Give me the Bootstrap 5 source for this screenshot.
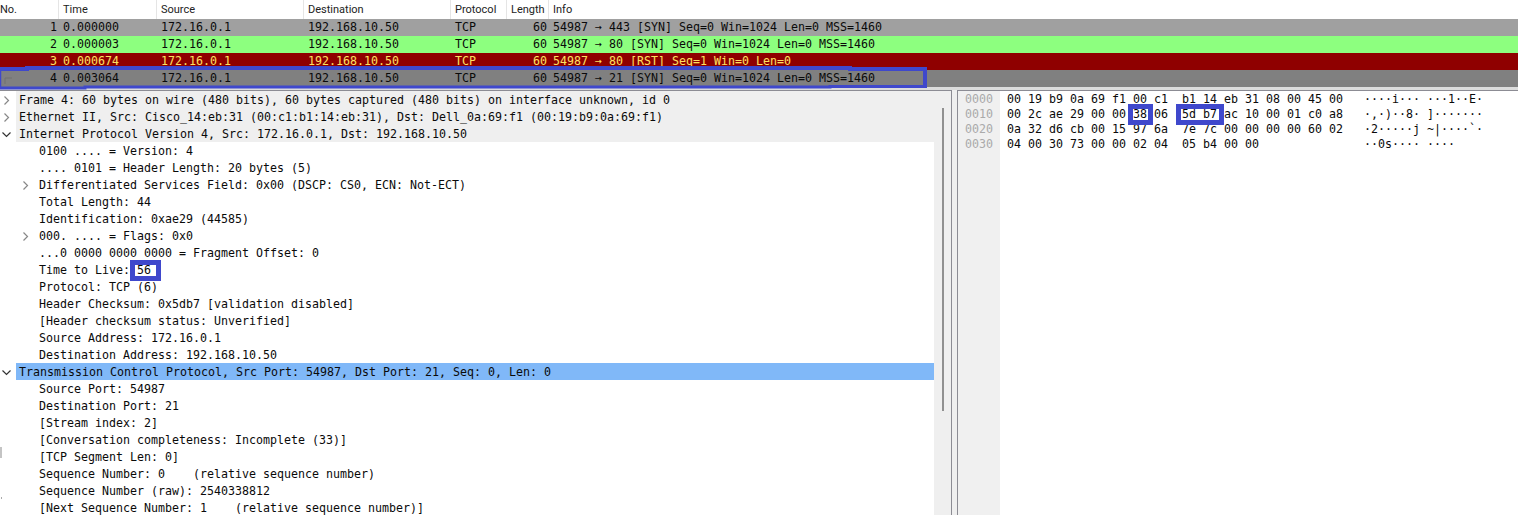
<!DOCTYPE html>
<html lang="en">
<head>
<meta charset="utf-8">
<title>Packet capture</title>
<link href="https://cdn.jsdelivr.net/npm/bootstrap@5.3.0/dist/css/bootstrap.min.css" rel="stylesheet">
<style>
html,body{height:518px;overflow:hidden;background:#fff;}
body{font-family:"DejaVu Sans Mono","Liberation Mono",monospace;font-size:11.63px;color:#0a0a0a;position:relative;}
.pk-head{height:19px;font-family:Roboto,"Liberation Sans",sans-serif;font-size:11px;line-height:19px;color:#222;}
.pk-head>div{padding-left:4px;border-right:1px solid #e5e5e5;height:19px;white-space:nowrap;}
.c-no{width:59px;flex:none;}
.pk-head .c-no{padding-left:0;}
.c-time{width:98px;flex:none;}
.c-src,.c-dst{width:147px;flex:none;}
.c-pro{width:56px;flex:none;}
.c-len{width:42px;flex:none;}
.c-info{flex:1 1 0;}
.pk-row{height:17px;line-height:17px;white-space:pre;overflow:hidden;}
.pk-row>.c-no{text-align:right;padding-right:2px;}
.pk-row>.c-time{padding-left:4px;}
.pk-row>.c-src,.pk-row>.c-dst,.pk-row>.c-pro{padding-left:4px;}
.pk-row>.c-len{text-align:right;padding-right:2px;}
.pk-row>.c-info{padding-left:4px;}
.r-gray{background:#a0a0a0;}
.r-green{background:#8dff7f;}
.r-red{background:#8f0000;color:#ffe060;}
.r-dark{background:#808080;}
.r-rest{height:3px;background:#dcdcdc;}
.panes{height:425px;}
.tree-pane,.scroll-pane,.off-col,.hex-col{border-top:1px solid #8c8c94;}
.tree-pane{width:934px;flex:none;overflow:hidden;}
.tr-row{height:17px;line-height:19px;white-space:pre;position:relative;padding-left:19px;}
.tr-row.sub{padding-left:39px;}
.tr-row.open{background:#efefef;margin-left:16px;padding-left:3px;}
.tr-row.sel{background:#80b8f8;margin-left:16px;padding-left:3px;}
.tw{position:absolute;top:5px;width:9px;height:9px;}
.open .tw,.sel .tw{left:-14px;}
.sub .tw{left:21px;}
.scroll-pane{width:18px;flex:none;background:#efefef;border-right:1px solid #8c8c94;}
.thumb{width:2px;margin-left:8px;height:303px;margin-top:17px;background:#909090;}
.sash{width:5px;flex:none;background:#efefef;}
.off-col{width:43px;flex:none;background:#f0f0f0;color:#aaa;padding-left:7px;padding-top:1px;line-height:15px;white-space:pre;border-left:1px solid #8c8c94;}
.hex-col{flex:1 1 0;padding-left:7px;padding-top:1px;line-height:15px;white-space:pre;overflow:hidden;}
.mark-box{position:absolute;border:5px solid #3f48cc;pointer-events:none;}
.overlay{position:absolute;left:0;top:0;pointer-events:none;}
</style>
</head>
<body>
<div class="d-flex pk-head">
<div class="c-no">No.</div><div class="c-time">Time</div><div class="c-src">Source</div><div class="c-dst">Destination</div><div class="c-pro">Protocol</div><div class="c-len">Length</div><div class="c-info border-0">Info</div>
</div>
<div class="d-flex pk-row r-gray"><div class="c-no">1</div><div class="c-time">0.000000</div><div class="c-src">172.16.0.1</div><div class="c-dst">192.168.10.50</div><div class="c-pro">TCP</div><div class="c-len">60</div><div class="c-info">54987 → 443 [SYN] Seq=0 Win=1024 Len=0 MSS=1460</div></div>
<div class="d-flex pk-row r-green"><div class="c-no">2</div><div class="c-time">0.000003</div><div class="c-src">172.16.0.1</div><div class="c-dst">192.168.10.50</div><div class="c-pro">TCP</div><div class="c-len">60</div><div class="c-info">54987 → 80 [SYN] Seq=0 Win=1024 Len=0 MSS=1460</div></div>
<div class="d-flex pk-row r-red"><div class="c-no">3</div><div class="c-time">0.000674</div><div class="c-src">172.16.0.1</div><div class="c-dst">192.168.10.50</div><div class="c-pro">TCP</div><div class="c-len">60</div><div class="c-info">54987 → 80 [RST] Seq=1 Win=0 Len=0</div></div>
<div class="d-flex pk-row r-dark"><div class="c-no">4</div><div class="c-time">0.003064</div><div class="c-src">172.16.0.1</div><div class="c-dst">192.168.10.50</div><div class="c-pro">TCP</div><div class="c-len">60</div><div class="c-info">54987 → 21 [SYN] Seq=0 Win=1024 Len=0 MSS=1460</div></div>
<div class="r-rest"></div>
<div class="d-flex panes">
<div class="tree-pane">
<div class="tr-row open"><svg class="tw" viewBox="0 0 9 9"><path d="M2.5 .5 6.5 4.5 2.5 8.5" fill="none" stroke="#888" stroke-width="1.2"/></svg>Frame 4: 60 bytes on wire (480 bits), 60 bytes captured (480 bits) on interface unknown, id 0</div>
<div class="tr-row open"><svg class="tw" viewBox="0 0 9 9"><path d="M2.5 .5 6.5 4.5 2.5 8.5" fill="none" stroke="#888" stroke-width="1.2"/></svg>Ethernet II, Src: Cisco_14:eb:31 (00:c1:b1:14:eb:31), Dst: Dell_0a:69:f1 (00:19:b9:0a:69:f1)</div>
<div class="tr-row open"><svg class="tw" viewBox="0 0 9 9"><path d="M.5 2.5 4.5 6.5 8.5 2.5" fill="none" stroke="#333" stroke-width="1.2"/></svg>Internet Protocol Version 4, Src: 172.16.0.1, Dst: 192.168.10.50</div>
<div class="tr-row sub">0100 .... = Version: 4</div>
<div class="tr-row sub">.... 0101 = Header Length: 20 bytes (5)</div>
<div class="tr-row sub"><svg class="tw" viewBox="0 0 9 9"><path d="M2.5 .5 6.5 4.5 2.5 8.5" fill="none" stroke="#888" stroke-width="1.2"/></svg>Differentiated Services Field: 0x00 (DSCP: CS0, ECN: Not-ECT)</div>
<div class="tr-row sub">Total Length: 44</div>
<div class="tr-row sub">Identification: 0xae29 (44585)</div>
<div class="tr-row sub"><svg class="tw" viewBox="0 0 9 9"><path d="M2.5 .5 6.5 4.5 2.5 8.5" fill="none" stroke="#888" stroke-width="1.2"/></svg>000. .... = Flags: 0x0</div>
<div class="tr-row sub">...0 0000 0000 0000 = Fragment Offset: 0</div>
<div class="tr-row sub">Time to Live: 56</div>
<div class="tr-row sub">Protocol: TCP (6)</div>
<div class="tr-row sub">Header Checksum: 0x5db7 [validation disabled]</div>
<div class="tr-row sub">[Header checksum status: Unverified]</div>
<div class="tr-row sub">Source Address: 172.16.0.1</div>
<div class="tr-row sub">Destination Address: 192.168.10.50</div>
<div class="tr-row sel"><svg class="tw" viewBox="0 0 9 9"><path d="M.5 2.5 4.5 6.5 8.5 2.5" fill="none" stroke="#333" stroke-width="1.2"/></svg>Transmission Control Protocol, Src Port: 54987, Dst Port: 21, Seq: 0, Len: 0</div>
<div class="tr-row sub">Source Port: 54987</div>
<div class="tr-row sub">Destination Port: 21</div>
<div class="tr-row sub">[Stream index: 2]</div>
<div class="tr-row sub">[Conversation completeness: Incomplete (33)]</div>
<div class="tr-row sub">[TCP Segment Len: 0]</div>
<div class="tr-row sub">Sequence Number: 0    (relative sequence number)</div>
<div class="tr-row sub">Sequence Number (raw): 2540338812</div>
<div class="tr-row sub">[Next Sequence Number: 1    (relative sequence number)]</div>
</div>
<div class="scroll-pane"><div class="thumb"></div></div>
<div class="sash"></div>
<div class="off-col">0000
0010
0020
0030</div>
<div class="hex-col">00 19 b9 0a 69 f1 00 c1  b1 14 eb 31 08 00 45 00   ····i··· ···1··E·
00 2c ae 29 00 00 38 06  5d b7 ac 10 00 01 c0 a8   ·,·)··8· ]·······
0a 32 d6 cb 00 15 97 6a  7e 7c 00 00 00 00 60 02   ·2·····j ~|····`·
04 00 30 73 00 00 02 04  05 b4 00 00               ··0s···· ····</div>
</div>
<div class="mark-box" style="left:130px;top:260px;width:31px;height:21px"></div>
<div class="mark-box" style="left:1128px;top:104px;width:25px;height:21px"></div>
<div class="mark-box" style="left:1176px;top:104px;width:48px;height:21px"></div>
<svg class="overlay" width="1518" height="518" viewBox="0 0 1518 518"><path d="M5 84V78H12" fill="none" stroke="#707070"/><rect x="0" y="447" width="2" height="11" fill="#c4c4c4"/><rect x="1" y="497" width="1" height="2" fill="#aaa"/><path d="M.5 68V89" fill="none" stroke="#3f48cc" stroke-width="1.5"/><path d="M0 69H27V68H850V69H925V85" fill="none" stroke="#3f48cc" stroke-width="4"/><path d="M927 86.5H830V87H85V88H0" fill="none" stroke="#3f48cc" stroke-width="3"/></svg>
</body>
</html>
